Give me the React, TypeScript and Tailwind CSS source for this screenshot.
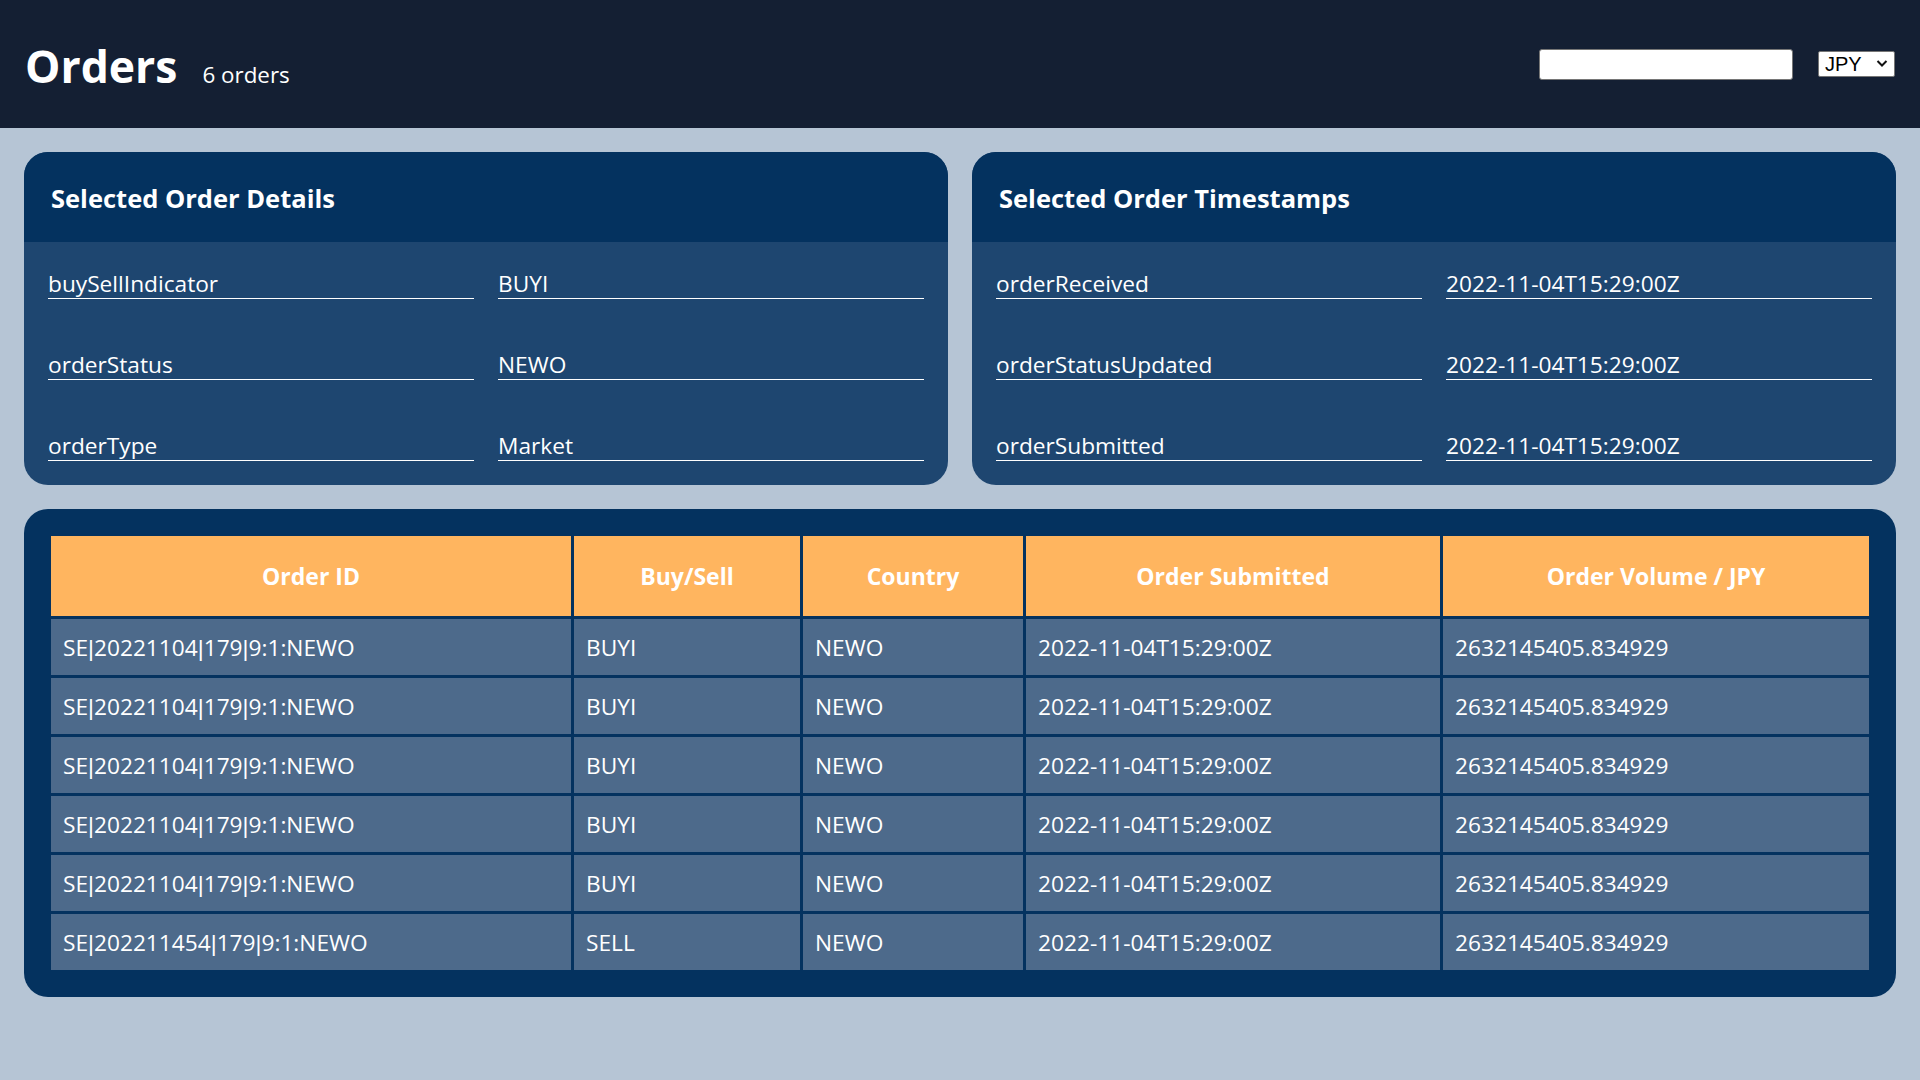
import React from "react";

const details = [
  ["buySellIndicator", "BUYI"],
  ["orderStatus", "NEWO"],
  ["orderType", "Market"],
];
const stamps = [
  ["orderReceived", "2022-11-04T15:29:00Z"],
  ["orderStatusUpdated", "2022-11-04T15:29:00Z"],
  ["orderSubmitted", "2022-11-04T15:29:00Z"],
];

const rows = [
  ["SE|20221104|179|9:1:NEWO", "BUYI"],
  ["SE|20221104|179|9:1:NEWO", "BUYI"],
  ["SE|20221104|179|9:1:NEWO", "BUYI"],
  ["SE|20221104|179|9:1:NEWO", "BUYI"],
  ["SE|20221104|179|9:1:NEWO", "BUYI"],
  ["SE|202211454|179|9:1:NEWO", "SELL"],
];

function OrderId({ id }: { id: string }) {
  const parts = id.split("|");
  return (
    <>
      {parts.map((p, i) => (
        <React.Fragment key={i}>
          {i > 0 && <span className="font-['Liberation_Sans',sans-serif]">|</span>}
          {p}
        </React.Fragment>
      ))}
    </>
  );
}

function Panel({ title, items }: { title: string; items: string[][] }) {
  return (
    <section className="rounded-3xl overflow-hidden bg-[#1e4670]">
      <div className="h-[90px] bg-[#04325f] flex items-center px-[27px] pt-[2px]">
        <h2 className="text-[25.5px] font-bold text-white">{title}</h2>
      </div>
      <div className="px-6 pt-[21px] pb-[24px] flex flex-col gap-[45px]">
        {items.map(([k, v]) => (
          <div key={k} className="grid grid-cols-2 gap-6">
            <div className="h-[36px] border-b border-white text-white text-[22.7px] pt-[6px] leading-[29px] truncate">{k}</div>
            <div className="h-[36px] border-b border-white text-white text-[22.7px] pt-[6px] leading-[29px] truncate">{v}</div>
          </div>
        ))}
      </div>
    </section>
  );
}

const th = "h-[80px] text-[23px] font-bold text-center bg-[#ffb55f]";
const td = "h-[56px] px-3 pt-[2px] text-[22.7px] bg-[#4d6a8b]";

export default function App() {
  return (
    <div className="min-h-screen bg-[#b6c5d5] font-['Open_Sans',sans-serif]">
      <header className="h-[128px] bg-[#141f33] flex items-center justify-between px-[25px]">
        <div className="flex items-baseline gap-[25px] pt-[4px]">
          <h1 className="text-[44.5px] font-bold text-white leading-none">Orders</h1>
          <span className="text-[22.4px] text-white leading-none">6 orders</span>
        </div>
        <div className="flex items-center gap-[25px]">
          <input
            type="text"
            className="w-[254px] h-[31px] bg-white border border-[#767676] rounded-[3px] outline-none"
          />
          <div className="relative">
            <select className="appearance-none w-[77px] h-[26px] bg-white border border-[#767676] rounded-[2px] pl-[6px] text-[20px] leading-[24px] text-black font-['Liberation_Sans',sans-serif]">
              <option>JPY</option>
            </select>
            <svg
              className="absolute right-[7px] top-[8px] pointer-events-none"
              width="12"
              height="9"
              viewBox="0 0 12 9"
              fill="none"
            >
              <path d="M1.5 2 L6 6.5 L10.5 2" stroke="#111" strokeWidth="2" />
            </svg>
          </div>
        </div>
      </header>
      <main className="p-6 flex flex-col gap-6">
        <div className="grid grid-cols-2 gap-6">
          <Panel title="Selected Order Details" items={details} />
          <Panel title="Selected Order Timestamps" items={stamps} />
        </div>
        <div className="rounded-3xl bg-[#04325f] p-6">
          <table className="w-full border-separate border-spacing-[3px] text-white">
            <thead>
              <tr>
                <th className={`w-[520px] ${th}`}>Order ID</th>
                <th className={`w-[226px] ${th}`}>Buy/Sell</th>
                <th className={`w-[220px] ${th}`}>Country</th>
                <th className={`w-[414px] ${th}`}>Order Submitted</th>
                <th className={`w-[426px] ${th}`}>Order Volume / JPY</th>
              </tr>
            </thead>
            <tbody>
              {rows.map(([id, bs], i) => (
                <tr key={i}>
                  <td className={td}>
                    <OrderId id={id} />
                  </td>
                  <td className={td}>{bs}</td>
                  <td className={td}>NEWO</td>
                  <td className={td}>2022-11-04T15:29:00Z</td>
                  <td className={td}>2632145405.834929</td>
                </tr>
              ))}
            </tbody>
          </table>
        </div>
      </main>
    </div>
  );
}
